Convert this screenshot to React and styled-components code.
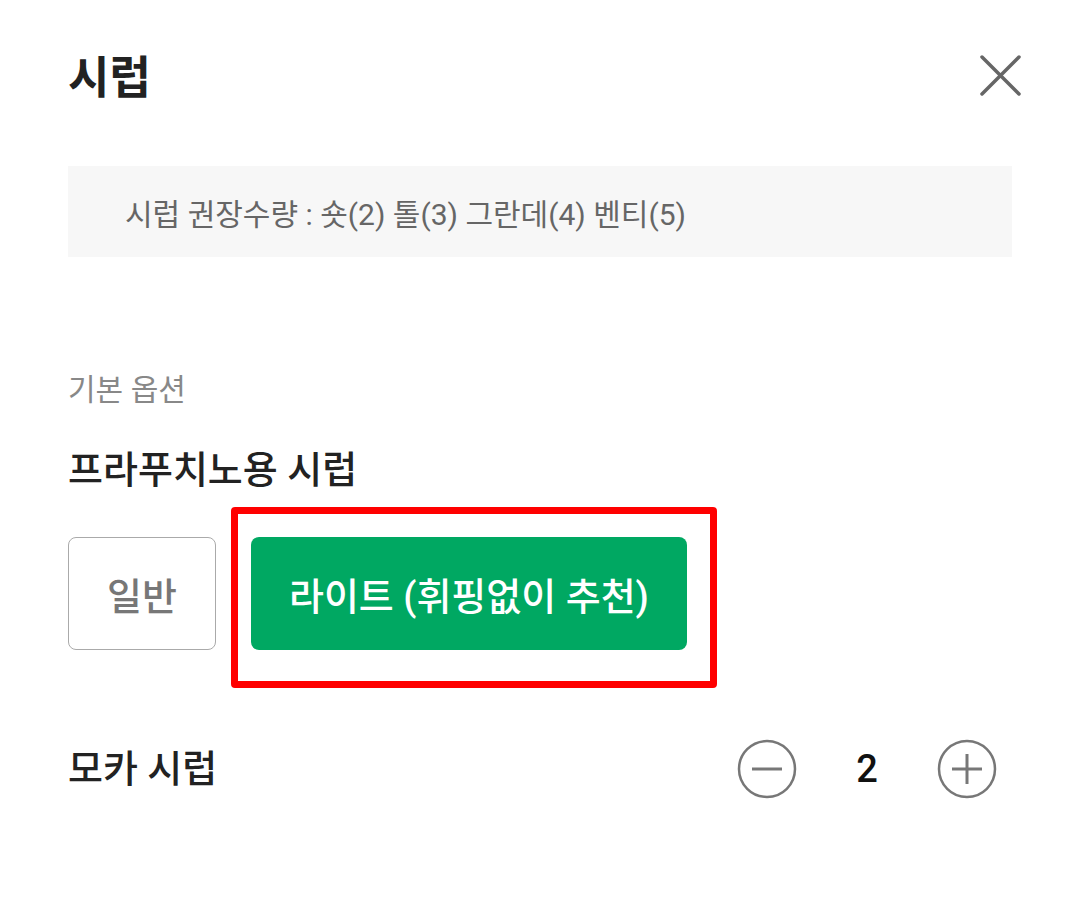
import styled, { createGlobalStyle } from "styled-components";

const GlobalStyle = createGlobalStyle`
  html, body {
    margin: 0;
    padding: 0;
    background: #ffffff;
  }
  body {
    font-family: Roboto, "Noto Sans CJK KR", sans-serif;
    color: #222222;
  }
`;

const Sheet = styled.div`
  width: 1080px;
  height: 910px;
  box-sizing: border-box;
  padding: 29px 68px 0 68px;
  display: flex;
  flex-direction: column;
  overflow: hidden;
`;

const Header = styled.div`
  height: 100px;
  display: flex;
  align-items: center;
  justify-content: space-between;
`;

const Title = styled.h1`
  margin: 0;
  font-size: 45px;
  line-height: 60px;
  font-weight: 700;
  color: #222222;
`;

const CloseButton = styled.button`
  width: 44px;
  height: 44px;
  margin-right: -10px;
  margin-top: -6px;
  padding: 0;
  border: none;
  background: none;
  display: flex;
  align-items: center;
  justify-content: center;
`;

const InfoBox = styled.div`
  margin-top: 37px;
  height: 91px;
  background: #f7f7f7;
  display: flex;
  align-items: center;
  padding-left: 57px;
  font-size: 30px;
  color: #666666;
`;

const SectionLabel = styled.div`
  margin-top: 112px;
  font-size: 30px;
  line-height: 42px;
  color: #888888;
`;

const OptionTitle = styled.div`
  margin-top: 33px;
  font-size: 38px;
  line-height: 52px;
  font-weight: 500;
  color: #222222;
`;

const ChoiceRow = styled.div`
  margin-top: 41px;
  display: flex;
  gap: 35px;
`;

const Choice = styled.button`
  position: relative;
  height: 113px;
  padding: 0 38px;
  box-sizing: border-box;
  border-radius: 8px;
  font-family: Roboto, "Noto Sans CJK KR", sans-serif;
  font-size: 38px;
  font-weight: 500;
  border: ${(p) => (p.$active ? "none" : "1px solid #aaaaaa")};
  background: ${(p) => (p.$active ? "#00a862" : "#ffffff")};
  color: ${(p) => (p.$active ? "#ffffff" : "#777777")};

  ${(p) =>
    p.$highlight &&
    `
    &::after {
      content: "";
      position: absolute;
      left: -20px;
      right: -30px;
      top: -30px;
      bottom: -38px;
      border: 7px solid #ff0000;
      border-radius: 4px;
    }
  `}
`;

const StepperRow = styled.div`
  margin-top: 89px;
  height: 60px;
  display: flex;
  align-items: center;
  justify-content: space-between;
`;

const RowLabel = styled.div`
  font-size: 38px;
  line-height: 52px;
  font-weight: 500;
  color: #222222;
`;

const Stepper = styled.div`
  display: flex;
  align-items: center;
  margin-right: 15px;
`;

const RoundButton = styled.button`
  width: 60px;
  height: 60px;
  padding: 0;
  border: none;
  background: none;
  display: flex;
`;

const Count = styled.span`
  width: 140px;
  text-align: center;
  font-size: 38px;
  font-weight: 500;
  color: #111111;
`;

function CloseIcon() {
  return (
    <svg width="44" height="44" viewBox="0 0 44 44">
      <path d="M4 3 L41 40 M41 3 L4 40" stroke="#666" strokeWidth="3.5" strokeLinecap="round" />
    </svg>
  );
}

function CircleIcon({ plus }) {
  return (
    <svg width="60" height="60" viewBox="0 0 60 60">
      <circle cx="30" cy="30" r="28" fill="none" stroke="#777" strokeWidth="2.5" />
      <path d="M15 30 H45" stroke="#777" strokeWidth="3" />
      {plus && <path d="M30 15 V45" stroke="#777" strokeWidth="3" />}
    </svg>
  );
}

export default function App() {
  return (
    <>
      <GlobalStyle />
      <Sheet>
        <Header>
          <Title>시럽</Title>
          <CloseButton aria-label="닫기">
            <CloseIcon />
          </CloseButton>
        </Header>
        <InfoBox>시럽 권장수량 : 숏(2) 톨(3) 그란데(4) 벤티(5)</InfoBox>
        <SectionLabel>기본 옵션</SectionLabel>
        <OptionTitle>프라푸치노용 시럽</OptionTitle>
        <ChoiceRow>
          <Choice>일반</Choice>
          <Choice $active $highlight>
            라이트 (휘핑없이 추천)
          </Choice>
        </ChoiceRow>
        <StepperRow>
          <RowLabel>모카 시럽</RowLabel>
          <Stepper>
            <RoundButton aria-label="빼기">
              <CircleIcon />
            </RoundButton>
            <Count>2</Count>
            <RoundButton aria-label="더하기">
              <CircleIcon plus />
            </RoundButton>
          </Stepper>
        </StepperRow>
      </Sheet>
    </>
  );
}
